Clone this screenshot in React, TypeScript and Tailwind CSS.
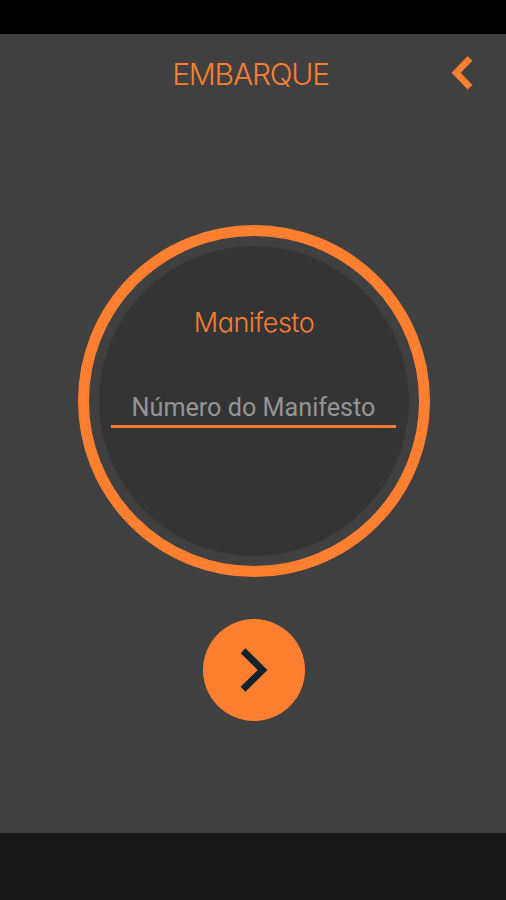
import { useState } from "react";

const BackIcon = () => (
  <svg width="24" height="36" viewBox="0 0 24 36" fill="none" stroke="#ff7f30" strokeWidth="6.6">
    <path d="M20 3.4 L6.2 17.7 L20 32.3" />
  </svg>
);

const NextIcon = () => (
  <svg width="30" height="44" viewBox="0 0 30 44" fill="none" stroke="#13232c" strokeWidth="6.8">
    <path d="M4 2.8 L23.6 22 L4 41.2" />
  </svg>
);

const App = () => {
  const [manifesto, setManifesto] = useState("");

  return (
    <div className="flex flex-col w-full h-[900px] bg-[#404040]">
      <div className="h-[34px] bg-black" />

      <header className="grid grid-cols-[1fr_auto_1fr] items-center h-[78px] pr-8">
        <span />
        <h1 className="ml-[27px] pt-[2px] font-['Inter','Liberation_Sans',sans-serif] font-light text-[30px] tracking-[-1.2px] whitespace-nowrap text-[#fb7f33]">
          EMBARQUE
        </h1>
        <button className="justify-self-end" aria-label="Voltar">
          <BackIcon />
        </button>
      </header>

      <main className="flex flex-1 flex-col items-center pt-[113px]">
        <div className="ml-[2px] size-[352px] rounded-full border-[11px] border-[#ff7f30] p-[10px]">
          <div className="flex size-full flex-col items-center rounded-full bg-[#343434] pt-[59px]">
            <h2 className="font-['Inter','Liberation_Sans',sans-serif] font-light text-[27px] leading-9 tracking-[-0.5px] [font-feature-settings:'cv11'] text-[#fb7f33]">
              Manifesto
            </h2>
            <input
              type="text"
              value={manifesto}
              onChange={(e) => setManifesto(e.target.value)}
              placeholder="Número do Manifesto"
              className="mt-[47px] mr-px h-[40px] w-[285px] border-b-[3px] border-[#f67d33] bg-transparent pt-[2px] text-center font-['Roboto',sans-serif] text-[25.2px] text-white outline-none placeholder:text-[#959595]"
            />
          </div>
        </div>

        <button
          className="mt-[42px] ml-[2px] flex size-[102px] items-center justify-center rounded-full bg-[#ff7f30]"
          aria-label="Avançar"
        >
          <NextIcon />
        </button>
      </main>

      <footer className="h-[67px] bg-[#171717]" />
    </div>
  );
};

export default App;
